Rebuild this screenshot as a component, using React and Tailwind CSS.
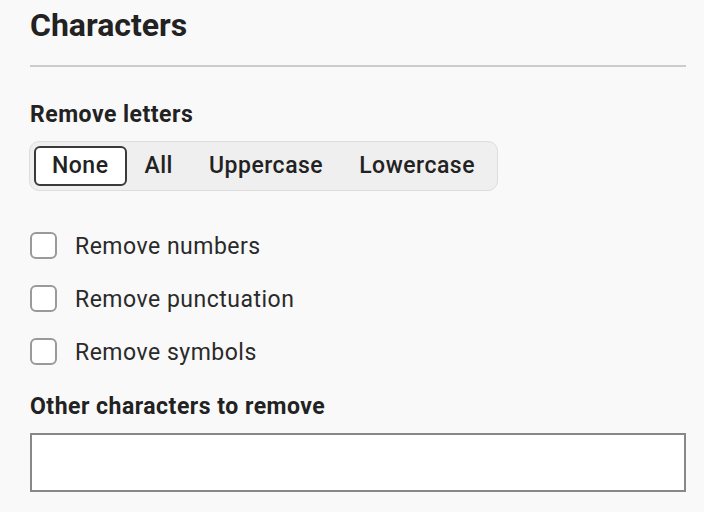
import React, { useState } from 'react';

const options = ["None", "All", "Uppercase", "Lowercase"];
const checks = ["Remove numbers", "Remove punctuation", "Remove symbols"];

const App = () => {
    const [mode, setMode] = useState("None");
    const [checked, setChecked] = useState({});
    const [other, setOther] = useState("");

    return (
        <div className="min-h-[512px] w-[704px] overflow-hidden bg-[#f9f9f9] px-[30px] pt-[5px] text-[#222] font-['Roboto',sans-serif]">
            <h1 className="text-[32px] leading-[40px] font-bold">Characters</h1>
            <div className="mt-[20px] h-[2px] w-[656px] bg-[#cccccc]" />

            <h2 className="mt-[34px] text-[23px] leading-[28px] font-bold tracking-[0.5px]">Remove letters</h2>
            <div className="mt-[12px] inline-flex rounded-[10px] border border-[#dddddd] bg-[#efefef] p-1 -ml-px">
                {options.map((opt) => (
                    <button
                        key={opt}
                        onClick={() => setMode(opt)}
                        className={
                            mode === opt
                                ? "rounded-[6px] border-2 border-[#3a3a3a] bg-white px-4 py-[6px] text-[23px] leading-6 font-medium tracking-[0.5px] text-[#222]"
                                : "rounded-[6px] border-2 border-transparent px-4 py-[6px] text-[23px] leading-6 font-medium tracking-[0.5px] text-[#222]"
                        }
                    >
                        {opt}
                    </button>
                ))}
            </div>

            <div className="mt-[38px] flex flex-col gap-[21px]">
                {checks.map((label) => (
                    <label key={label} className="flex items-center gap-[18px] cursor-pointer">
                        <input
                            type="checkbox"
                            checked={!!checked[label]}
                            onChange={() => setChecked({ ...checked, [label]: !checked[label] })}
                            className="h-[27px] w-[27px] appearance-none rounded-[6px] border-2 border-[#9a9a9a] bg-white"
                        />
                        <span className="pt-1 text-[23px] leading-[28px] tracking-[0.5px] text-[#2a2a2a]">{label}</span>
                    </label>
                ))}
            </div>

            <h2 className="mt-[26px] text-[23px] leading-[28px] font-bold tracking-[0.5px]">Other characters to remove</h2>
            <input
                type="text"
                value={other}
                onChange={(e) => setOther(e.target.value)}
                className="mt-[12px] block h-[59px] w-[656px] border-2 border-[#888888] bg-white px-3 text-[20px] outline-none"
            />
        </div>
    );
};

export default App;
